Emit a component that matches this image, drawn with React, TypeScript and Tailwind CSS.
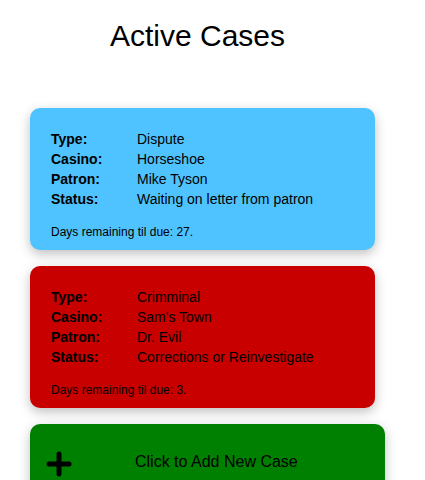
import React from "react";

type Case = {
  id: number;
  type: string;
  casino: string;
  patron: string;
  status: string;
  days: number;
};

const cases: Case[] = [
  { id: 1, type: "Dispute", casino: "Horseshoe", patron: "Mike Tyson", status: "Waiting on letter from patron", days: 27 },
  { id: 2, type: "Crimminal", casino: "Sam's Town", patron: "Dr. Evil", status: "Corrections or Reinvestigate", days: 3 },
];

function CaseCard({ c }: { c: Case }) {
  // color by urgency
  const bg = c.days <= 7 ? "bg-[#c80000]" : "bg-[#4fc3ff]";
  return (
    <div className={`${bg} w-[345px] rounded-[10px] pt-[21px] pb-[11px] px-[21px] shadow-[0_4px_12px_rgba(0,0,0,0.25)] text-black`}>
      <div className="grid grid-cols-[86px_1fr] text-[14px] leading-[20px]">
        <div className="font-bold">Type:</div>
        <div>{c.type}</div>
        <div className="font-bold">Casino:</div>
        <div>{c.casino}</div>
        <div className="font-bold">Patron:</div>
        <div>{c.patron}</div>
        <div className="font-bold">Status:</div>
        <div>{c.status}</div>
      </div>
      <div className="mt-[16px] text-[12px] leading-[14px]">Days remaining til due: {c.days}.</div>
    </div>
  );
}

export default function App() {
  return (
    <div className="min-h-screen bg-white font-['Liberation_Sans',Arial,sans-serif] text-black">
      <h1 className="pt-[19px] mr-[30px] text-center text-[30px] leading-[34px] font-normal">Active Cases</h1>

      <div className="pl-[30px] pt-[55px] flex flex-col gap-[16px]">
        {cases.map(c => (
          <CaseCard key={c.id} c={c} />
        ))}

        {/* Add new case */}
        <button className="w-[355px] h-[76px] rounded-[10px] bg-[#008000] shadow-[0_4px_12px_rgba(0,0,0,0.25)] flex items-center pl-[16px] text-left">
          <svg width="26" height="26" viewBox="0 0 26 26" className="mt-[4px]">
            <path d="M3 13h20M13 3v20" stroke="#000" strokeWidth="5" strokeLinecap="round" fill="none" />
          </svg>
          <span className="ml-[63px] text-[16px] text-black">Click to Add New Case</span>
        </button>
      </div>
    </div>
  );
}
